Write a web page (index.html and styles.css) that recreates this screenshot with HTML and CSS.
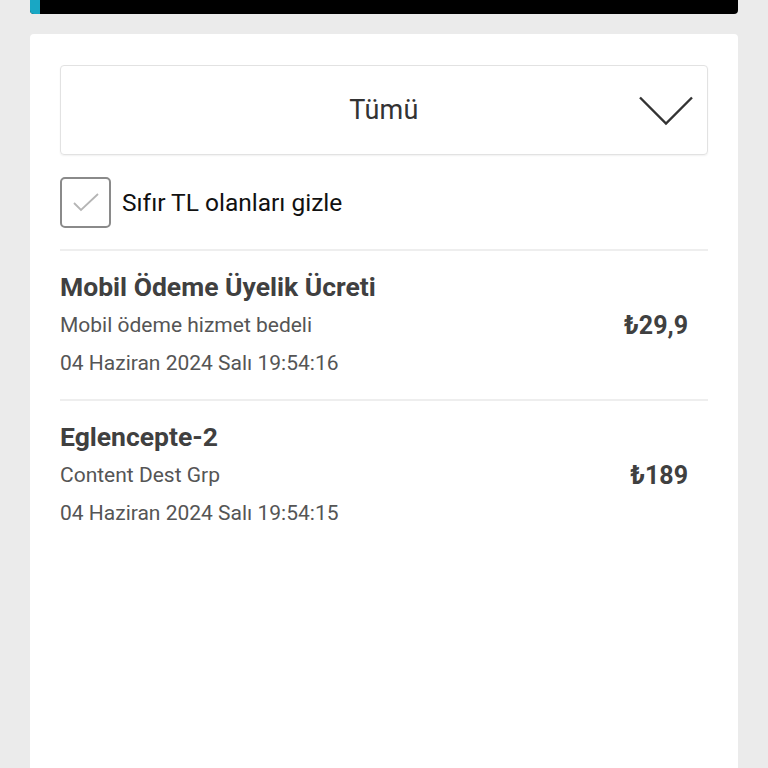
FILE: index.html
```html
<!DOCTYPE html>
<html lang="tr">
<head>
<meta charset="utf-8">
<link rel="stylesheet" href="styles.css">
</head>
<body>
<div class="page">
  <div class="topbar"><div class="accent"></div></div>
  <div class="card">
    <div class="select">
      <span class="select-text">Tümü</span>
      <svg class="chevron" width="54" height="30" viewBox="0 0 54 30"><polyline points="1,1.5 27,27.5 53,1.5" fill="none" stroke="#333" stroke-width="2.4"/></svg>
    </div>
    <div class="check-row">
      <div class="checkbox">
        <svg width="28" height="22" viewBox="0 0 28 22"><polyline points="2,11 9,18 26,2" fill="none" stroke="#b5b5b5" stroke-width="1.8"/></svg>
      </div>
      <span class="check-label">Sıfır TL olanları gizle</span>
    </div>
    <div class="item">
      <div class="item-info">
        <div class="item-title">Mobil Ödeme Üyelik Ücreti</div>
        <div class="item-sub">Mobil ödeme hizmet bedeli</div>
        <div class="item-date">04 Haziran 2024 Salı 19:54:16</div>
      </div>
      <div class="item-price">₺29,9</div>
    </div>
    <div class="item">
      <div class="item-info">
        <div class="item-title">Eglencepte-2</div>
        <div class="item-sub">Content Dest Grp</div>
        <div class="item-date">04 Haziran 2024 Salı 19:54:15</div>
      </div>
      <div class="item-price">₺189</div>
    </div>
  </div>
</div>
</body>
</html>
```
FILE: styles.css
```css
* { box-sizing: border-box; }
html, body { margin: 0; padding: 0; }
body {
  background: #ebebeb;
  font-family: "Roboto", "Liberation Sans", sans-serif;
  width: 768px;
  height: 768px;
  overflow: hidden;
}
.page {
  padding: 0 30px;
}
.topbar {
  height: 14px;
  background: #000;
  border-radius: 0 0 4px 4px;
  overflow: hidden;
}
.accent {
  width: 10px;
  height: 100%;
  background: #19a7c4;
}
.card {
  margin-top: 20px;
  background: #fff;
  border-radius: 4px 4px 0 0;
  height: 740px;
  padding: 31px 30px 0;
}
.select {
  height: 90px;
  border: 1px solid #e2e2e2;
  border-radius: 4px;
  box-shadow: 0 1px 2px rgba(0,0,0,0.06);
  display: flex;
  align-items: center;
  justify-content: center;
  position: relative;
}
.select-text {
  font-size: 27px;
  color: #333;
  letter-spacing: 0.3px;
}
.chevron {
  position: absolute;
  right: 14px;
  top: 30px;
}
.check-row {
  display: flex;
  align-items: center;
  gap: 11px;
  margin-top: 22px;
  padding-bottom: 21px;
  border-bottom: 2px solid #eeeeee;
}
.checkbox {
  width: 51px;
  height: 51px;
  border: 2px solid #8a8a8a;
  border-radius: 5px;
  display: flex;
  align-items: center;
  justify-content: center;
}
.check-label {
  font-size: 24.5px;
  color: #111;
}
.item {
  display: flex;
  align-items: center;
  justify-content: space-between;
  padding: 17px 20px 17px 0;
  border-bottom: 2px solid #eeeeee;
}
.item-title {
  font-size: 26.5px;
  font-weight: 700;
  color: #404040;
  line-height: 38px;
}
.item-sub, .item-date {
  font-size: 21px;
  color: #555;
  line-height: 38px;
}
.item-price {
  font-size: 25px;
  font-weight: 700;
  color: #404040;
}
.item:last-child { border-bottom: none; }
```
